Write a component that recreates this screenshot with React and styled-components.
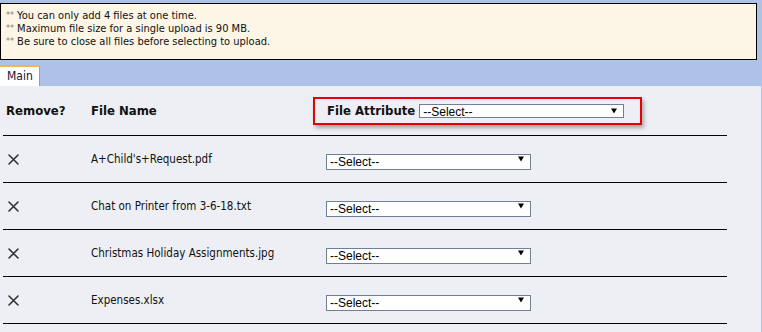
import React from "react";
import styled, { createGlobalStyle } from "styled-components";

const GlobalStyle = createGlobalStyle`
  html, body { margin: 0; padding: 0; }
  body {
    background: #aec2e8;
    font-family: "DejaVu Sans Condensed", "DejaVu Sans", sans-serif;
    overflow: hidden;
  }
`;

const Page = styled.div`
  width: 762px;
  height: 332px;
  padding-top: 3px;
  box-sizing: border-box;
  display: flex;
  flex-direction: column;
`;

const Notice = styled.div`
  box-sizing: border-box;
  width: 757px;
  height: 57px;
  background: #fdf5e6;
  border: 1px solid #000;
  padding: 5px 5px;
  font-size: 11px;
  line-height: 12px;
  color: #111;
`;

const Stars = styled.span`
  color: #8a7a6a;
  font-size: 9px;
  margin-right: 3px;
  vertical-align: 1px;
`;

const TabBar = styled.div`
  height: 26px;
  display: flex;
  align-items: flex-end;
`;

const Tab = styled.div`
  box-sizing: border-box;
  width: 40px;
  height: 21px;
  background: #fff;
  border-top: 2px solid #f6b347;
  border-right: 1px solid #9aa0aa;
  border-top-right-radius: 2px;
  font-size: 12px;
  color: #201030;
  padding: 2px 0 0 7px;
`;

const Content = styled.div`
  flex: 1;
  background: #eeeff4;
  margin-right: 1px;
  padding: 0 34px 0 3px;
`;

const Row = styled.div`
  display: grid;
  grid-template-columns: 88px 222px 1fr;
  align-items: center;
  height: ${(p) => p.$h}px;
  border-bottom: 1px solid #000;
`;

const HeadCell = styled.div`
  font-weight: bold;
  font-size: 13px;
  color: #111;
  padding-left: ${(p) => p.$pad || 0}px;
`;

const AttrBox = styled.div`
  box-sizing: border-box;
  width: 329px;
  height: 28px;
  border: 2px solid #e80000;
  box-shadow: 2px 3px 4px rgba(0, 0, 0, 0.3);
  display: flex;
  align-items: center;
  padding-left: 12px;
  gap: 4px;
  font-weight: bold;
  font-size: 13px;
  color: #111;
`;

const SelectWrap = styled.div`
  position: relative;
  width: ${(p) => p.$w}px;
  height: ${(p) => p.$h}px;
  margin-left: ${(p) => p.$ml || 0}px;
`;

const Select = styled.select`
  appearance: none;
  -webkit-appearance: none;
  box-sizing: border-box;
  width: 100%;
  height: 100%;
  margin: 0;
  border: 1px solid #6f7f95;
  border-radius: 0;
  background: #fff;
  font-family: "Liberation Sans", Arial, sans-serif;
  font-size: 12px;
  color: #000;
  padding: 0 0 0 3px;
  outline: none;
`;

const Arrow = styled.svg`
  position: absolute;
  right: 7px;
  top: 50%;
  margin-top: -3px;
  pointer-events: none;
`;

const RemoveCell = styled.div`
  padding-left: 5px;
  display: flex;
  align-items: center;
`;

const FileName = styled.div`
  font-size: 11.5px;
  color: #111;
`;

const Dropdown = ({ w, h, ml }) => (
  <SelectWrap $w={w} $h={h} $ml={ml}>
    <Select defaultValue="">
      <option value="">--Select--</option>
    </Select>
    <Arrow width="6" height="6" viewBox="0 0 6 6">
      <path d="M0 0.5 H6 L3 5.5 Z" fill="#000" />
    </Arrow>
  </SelectWrap>
);

const XIcon = () => (
  <svg width="11" height="11" viewBox="0 0 11 11">
    <path d="M1 1 L10 10 M10 1 L1 10" stroke="#333" strokeWidth="1.6" strokeLinecap="round" />
  </svg>
);

const files = [
  "A+Child's+Request.pdf",
  "Chat on Printer from 3-6-18.txt",
  "Christmas Holiday Assignments.jpg",
  "Expenses.xlsx",
];

export default function App() {
  return (
    <>
      <GlobalStyle />
      <Page>
        <Notice>
          <div><Stars>**</Stars>You can only add 4 files at one time.</div>
          <div><Stars>**</Stars>Maximum file size for a single upload is 90 MB.</div>
          <div><Stars>**</Stars>Be sure to close all files before selecting to upload.</div>
        </Notice>
        <TabBar>
          <Tab>Main</Tab>
        </TabBar>
        <Content>
          <Row $h={49}>
            <HeadCell $pad={3}>Remove?</HeadCell>
            <HeadCell>File Name</HeadCell>
            <AttrBox>
              File Attribute
              <Dropdown w={205} h={14} />
            </AttrBox>
          </Row>
          {files.map((f) => (
            <Row key={f} $h={46}>
              <RemoveCell>
                <XIcon />
              </RemoveCell>
              <FileName>{f}</FileName>
              <Dropdown w={205} h={16} ml={13} />
            </Row>
          ))}
        </Content>
      </Page>
    </>
  );
}
